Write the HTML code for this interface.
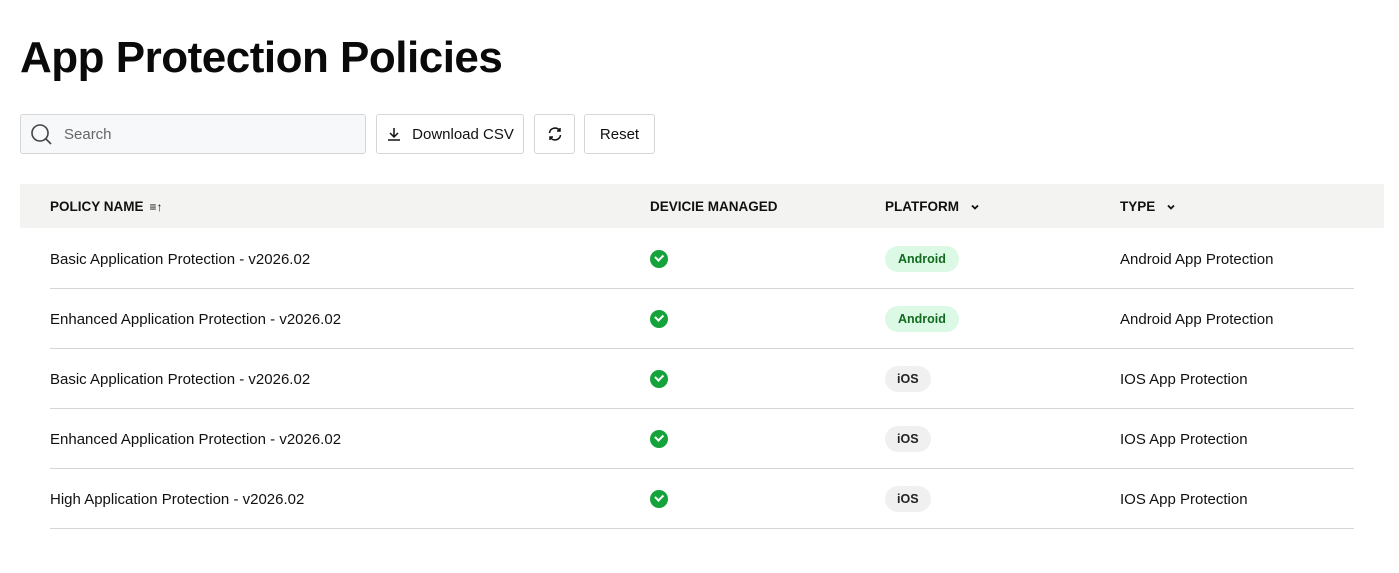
<!DOCTYPE html>
<html><head><meta charset="utf-8"><style>
*{box-sizing:border-box;margin:0;padding:0}
body{width:1399px;height:573px;background:#fff;font-family:"Liberation Sans",Arial,sans-serif;color:#111;position:relative;overflow:hidden}
.a{position:absolute}
h1{position:absolute;left:20px;top:33px;font-size:44px;font-weight:700;letter-spacing:-0.5px;color:#0a0a0a}
.btn{position:absolute;top:114px;height:40px;border:1px solid #d6d6d6;border-radius:3px;background:#fff;font-size:15px;display:flex;align-items:center;justify-content:center}
.hd{position:absolute;left:20px;top:184px;width:1364px;height:44px;background:#f3f3f2}
.hc{position:absolute;top:199px;font-size:13.5px;font-weight:700;color:#111;display:flex;align-items:center}
.row{position:absolute;left:50px;width:1304px;height:60px;border-bottom:1px solid #d4d4d4}
.t{position:absolute;font-size:15px;top:22px}
.chk{position:absolute;left:600px;top:21px;width:18px;height:18px;border-radius:50%;background:#13a33a}
.chk::after{content:"";position:absolute;left:5px;top:4px;width:6px;height:3.5px;border-left:2px solid #fff;border-bottom:2px solid #fff;transform:rotate(-45deg)}
.pill{position:absolute;left:835px;top:17px;height:26px;border-radius:13px;font-size:12.5px;font-weight:700;display:flex;align-items:center;padding:0 13px}
.and{background:#dcf9e6;color:#116b1f}
.ios{background:#f0f0f0;color:#222;padding:0 12px}
</style></head><body>
<h1>App Protection Policies</h1>
<div class="a" style="left:20px;top:114px;width:346px;height:40px;border:1px solid #d6d6d6;border-radius:3px;background:#f7f8f9"></div>
<svg class="a" style="left:30px;top:123px" width="24" height="24" viewBox="0 0 24 24"><circle cx="10" cy="10" r="8" fill="none" stroke="#444" stroke-width="1.6"/><line x1="16" y1="16" x2="21" y2="21" stroke="#444" stroke-width="1.6"/></svg>
<div class="a" style="left:64px;top:126px;font-size:15px;color:#666">Search</div>
<div class="btn" style="left:376px;width:148px"><svg width="16" height="16" viewBox="0 0 16 16" style="margin-right:10px"><path d="M8 2v8M4 7l4 4 4-4M2 14h12" fill="none" stroke="#111" stroke-width="1.5"/></svg>Download CSV</div>
<div class="btn" style="left:534px;width:41px"><svg width="18" height="18" viewBox="0 0 18 18"><path d="M3.5 8a5.5 5.5 0 0 1 10-2.5M14.5 10a5.5 5.5 0 0 1-10 2.5" fill="none" stroke="#111" stroke-width="1.5"/><path d="M14 3v3h-3M4 15v-3h3" fill="none" stroke="#111" stroke-width="1.5"/></svg></div>
<div class="btn" style="left:584px;width:71px">Reset</div>
<div class="hd"></div>
<div class="hc" style="left:50px">POLICY NAME <span style="font-weight:400;margin-left:6px;font-size:12px">≡↑</span></div>
<div class="hc" style="left:650px">DEVICIE MANAGED</div>
<div class="hc" style="left:885px">PLATFORM <svg style="margin-left:11px" width="10" height="8" viewBox="0 0 10 8"><path d="M2 2.5l3 3 3-3" fill="none" stroke="#111" stroke-width="1.8"/></svg></div>
<div class="hc" style="left:1120px">TYPE <svg style="margin-left:11px" width="10" height="8" viewBox="0 0 10 8"><path d="M2 2.5l3 3 3-3" fill="none" stroke="#111" stroke-width="1.8"/></svg></div>
<div class="row" style="top:229px"><div class="t" style="left:0">Basic Application Protection - v2026.02</div><div class="chk"></div><div class="pill and">Android</div><div class="t" style="left:1070px">Android App Protection</div></div>
<div class="row" style="top:289px"><div class="t" style="left:0">Enhanced Application Protection - v2026.02</div><div class="chk"></div><div class="pill and">Android</div><div class="t" style="left:1070px">Android App Protection</div></div>
<div class="row" style="top:349px"><div class="t" style="left:0">Basic Application Protection - v2026.02</div><div class="chk"></div><div class="pill ios">iOS</div><div class="t" style="left:1070px">IOS App Protection</div></div>
<div class="row" style="top:409px"><div class="t" style="left:0">Enhanced Application Protection - v2026.02</div><div class="chk"></div><div class="pill ios">iOS</div><div class="t" style="left:1070px">IOS App Protection</div></div>
<div class="row" style="top:469px"><div class="t" style="left:0">High Application Protection - v2026.02</div><div class="chk"></div><div class="pill ios">iOS</div><div class="t" style="left:1070px">IOS App Protection</div></div>
</body></html>
